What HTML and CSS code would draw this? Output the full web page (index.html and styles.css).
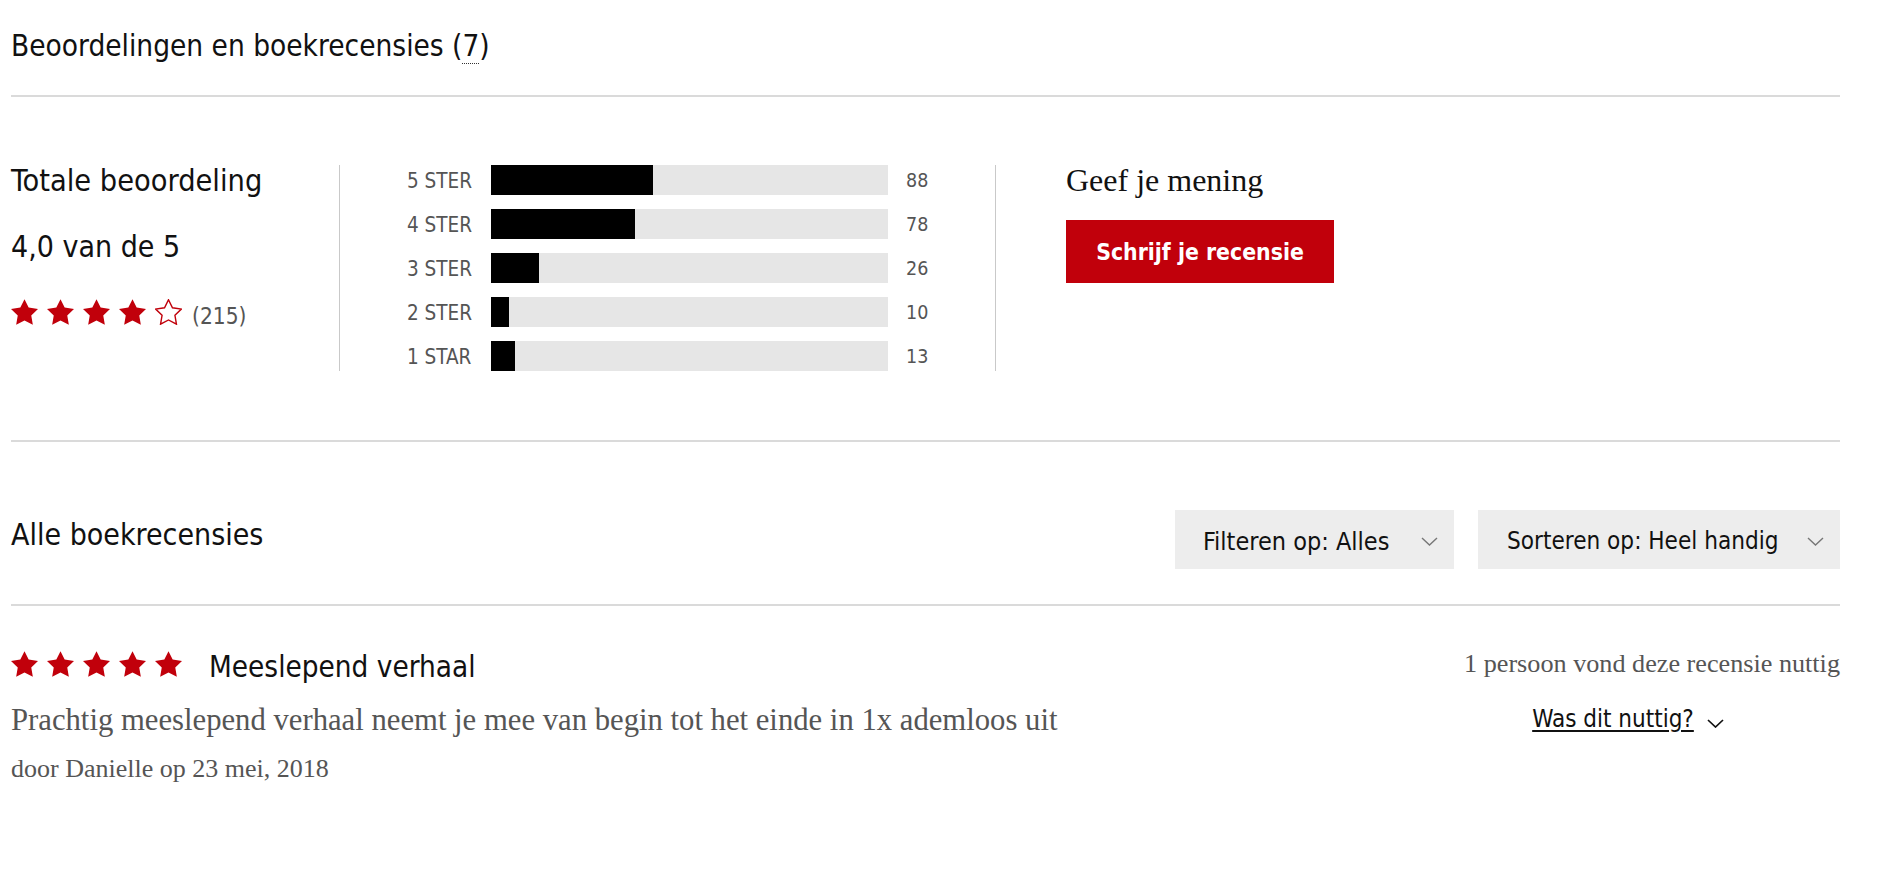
FILE: index.html
```html
<!DOCTYPE html>
<html lang="nl">
<head>
<meta charset="utf-8">
<title>Beoordelingen en boekrecensies</title>
<link rel="stylesheet" href="styles.css">
</head>
<body>
<div class="page">
  <header class="rv-head">
    <h2 class="rv-title">Beoordelingen en boekrecensies (<span class="rv-count">7</span>)</h2>
  </header>

  <section class="summary">
    <div class="overall">
      <div class="overall-title">Totale beoordeling</div>
      <div class="overall-score">4,0 van de 5</div>
      <div class="overall-stars">
        <svg class="star" viewBox="2 2 20 19.02"><polygon points="12,2 15.09,8.26 22,9.27 17,14.14 18.18,21.02 12,17.77 5.82,21.02 7,14.14 2,9.27 8.91,8.26"/></svg>
        <svg class="star" viewBox="2 2 20 19.02"><polygon points="12,2 15.09,8.26 22,9.27 17,14.14 18.18,21.02 12,17.77 5.82,21.02 7,14.14 2,9.27 8.91,8.26"/></svg>
        <svg class="star" viewBox="2 2 20 19.02"><polygon points="12,2 15.09,8.26 22,9.27 17,14.14 18.18,21.02 12,17.77 5.82,21.02 7,14.14 2,9.27 8.91,8.26"/></svg>
        <svg class="star" viewBox="2 2 20 19.02"><polygon points="12,2 15.09,8.26 22,9.27 17,14.14 18.18,21.02 12,17.77 5.82,21.02 7,14.14 2,9.27 8.91,8.26"/></svg>
        <svg class="star star-empty" viewBox="1.5 1.5 21 20.1"><polygon points="12,2 15.09,8.26 22,9.27 17,14.14 18.18,21.02 12,17.77 5.82,21.02 7,14.14 2,9.27 8.91,8.26"/></svg>
        <span class="overall-count">(215)</span>
      </div>
    </div>

    <div class="dist">
      <div class="dist-label">5 STER</div>
      <div class="dist-bar"><div class="dist-fill" style="width:40.93%"></div></div>
      <div class="dist-num">88</div>

      <div class="dist-label">4 STER</div>
      <div class="dist-bar"><div class="dist-fill" style="width:36.28%"></div></div>
      <div class="dist-num">78</div>

      <div class="dist-label">3 STER</div>
      <div class="dist-bar"><div class="dist-fill" style="width:12.09%"></div></div>
      <div class="dist-num">26</div>

      <div class="dist-label">2 STER</div>
      <div class="dist-bar"><div class="dist-fill" style="width:4.65%"></div></div>
      <div class="dist-num">10</div>

      <div class="dist-label">1 STAR</div>
      <div class="dist-bar"><div class="dist-fill" style="width:6.05%"></div></div>
      <div class="dist-num">13</div>
    </div>

    <div class="opinion">
      <div class="opinion-title">Geef je mening</div>
      <button class="btn-write" type="button">Schrijf je recensie</button>
    </div>
  </section>

  <section class="list-head">
    <h3 class="list-title">Alle boekrecensies</h3>
    <div class="controls">
      <div class="select select-filter">
        <span>Filteren op: Alles</span>
        <svg class="chev" viewBox="0 0 17 9"><polyline points="1,1 8.5,8 16,1"/></svg>
      </div>
      <div class="select select-sort">
        <span>Sorteren op: Heel handig</span>
        <svg class="chev" viewBox="0 0 17 9"><polyline points="1,1 8.5,8 16,1"/></svg>
      </div>
    </div>
  </section>

  <article class="review">
    <div class="review-main">
      <div class="review-top">
        <div class="review-stars">
          <svg class="star" viewBox="2 2 20 19.02"><polygon points="12,2 15.09,8.26 22,9.27 17,14.14 18.18,21.02 12,17.77 5.82,21.02 7,14.14 2,9.27 8.91,8.26"/></svg>
          <svg class="star" viewBox="2 2 20 19.02"><polygon points="12,2 15.09,8.26 22,9.27 17,14.14 18.18,21.02 12,17.77 5.82,21.02 7,14.14 2,9.27 8.91,8.26"/></svg>
          <svg class="star" viewBox="2 2 20 19.02"><polygon points="12,2 15.09,8.26 22,9.27 17,14.14 18.18,21.02 12,17.77 5.82,21.02 7,14.14 2,9.27 8.91,8.26"/></svg>
          <svg class="star" viewBox="2 2 20 19.02"><polygon points="12,2 15.09,8.26 22,9.27 17,14.14 18.18,21.02 12,17.77 5.82,21.02 7,14.14 2,9.27 8.91,8.26"/></svg>
          <svg class="star" viewBox="2 2 20 19.02"><polygon points="12,2 15.09,8.26 22,9.27 17,14.14 18.18,21.02 12,17.77 5.82,21.02 7,14.14 2,9.27 8.91,8.26"/></svg>
        </div>
        <h4 class="review-title">Meeslepend verhaal</h4>
      </div>
      <p class="review-body">Prachtig meeslepend verhaal neemt je mee van begin tot het einde in 1x ademloos uit</p>
      <p class="review-meta">door Danielle op 23 mei, 2018</p>
    </div>
    <div class="review-side">
      <div class="review-helpful">1 persoon vond deze recensie nuttig</div>
      <div class="review-vote">
        <span class="vote-link">Was dit nuttig?</span>
        <svg class="chev chev-dark" viewBox="0 0 17 9"><polyline points="1,1 8.5,8 16,1"/></svg>
      </div>
    </div>
  </article>
</div>
</body>
</html>
```

FILE: styles.css
```css
html, body {
  margin: 0;
  padding: 0;
  background: #ffffff;
}

body {
  font-family: "DejaVu Sans Condensed", "Liberation Sans", sans-serif;
  color: #111111;
}

.page {
  padding: 0 38px 0 11px;
}

/* header */
.rv-head {
  padding: 29px 0 32px;
  border-bottom: 2px solid #dadada;
}

.rv-title {
  margin: 0;
  font-size: 29.5px;
  line-height: 34px;
  font-weight: normal;
}

.rv-count {
  border-bottom: 1px dotted #333333;
}

/* summary */
.summary {
  display: flex;
  padding: 68px 0 69px;
  border-bottom: 2px solid #dadada;
}

.overall {
  width: 328px;
  border-right: 1px solid #c9c9c9;
}

.overall-title,
.overall-score {
  font-size: 30px;
  line-height: 34px;
}

.overall-title {
  font-size: 30.4px;
  margin-top: -1px;
}

.overall-score {
  margin-top: 32px;
}

.overall-stars {
  display: flex;
  align-items: flex-start;
  margin-top: 35px;
  height: 26px;
}

.star {
  width: 27px;
  height: 26px;
  margin-right: 9px;
  fill: #c1000b;
  flex: none;
}

.star-empty {
  fill: none;
  stroke: #c1000b;
  stroke-width: 1.1;
  stroke-linejoin: miter;
}

.overall-count {
  margin-left: 1px;
  margin-top: 4px;
  font-size: 22.5px;
  line-height: 26px;
  color: #555555;
}

.dist {
  display: grid;
  grid-template-columns: 83px 397px auto;
  grid-auto-rows: 30px;
  row-gap: 14px;
  width: 587px;
  padding-left: 68px;
  border-right: 1px solid #c9c9c9;
}

.dist-label,
.dist-num {
  font-size: 19.5px;
  line-height: 32px;
  color: #555555;
}

.dist-label {
  font-size: 20.5px;
  margin-left: -1px;
}

.dist-num {
  padding-left: 18px;
}

.dist-bar {
  background: #e6e6e6;
  height: 30px;
}

.dist-fill {
  background: #000000;
  height: 100%;
}

.opinion {
  padding-left: 70px;
}

.opinion-title {
  margin-top: -2px;
  font-family: "Liberation Serif", serif;
  font-size: 32px;
  line-height: 34px;
  color: #111111;
}

.btn-write {
  display: block;
  margin-top: 23px;
  width: 268px;
  height: 63px;
  border: none;
  padding: 0;
  background: #c1000b;
  color: #ffffff;
  font-family: "DejaVu Sans Condensed", "Liberation Sans", sans-serif;
  font-weight: bold;
  font-size: 22.8px;
  cursor: pointer;
}

/* list head */
.list-head {
  display: flex;
  justify-content: space-between;
  align-items: flex-start;
  padding: 68px 0 35px;
  border-bottom: 2px solid #dadada;
}

.list-title {
  margin: 8px 0 0;
  font-size: 30px;
  line-height: 34px;
  font-weight: normal;
}

.controls {
  display: flex;
  gap: 24px;
}

.select {
  display: flex;
  align-items: center;
  justify-content: space-between;
  box-sizing: border-box;
  height: 59px;
  padding: 3px 16px 0 28px;
  background: #ededed;
  font-size: 24.5px;
  color: #111111;
}

.select-filter {
  width: 279px;
  font-size: 25px;
}

.select-sort {
  width: 362px;
  padding-left: 29px;
  font-size: 24.1px;
}

.chev {
  width: 17px;
  height: 9px;
  fill: none;
  stroke: #777777;
  stroke-width: 1.4;
  flex: none;
}

.chev-dark {
  stroke: #111111;
  stroke-width: 1.7;
  margin-left: 13px;
  margin-top: 15px;
}

/* review */
.review {
  display: flex;
  padding-top: 44px;
}

.review-main {
  flex: 1;
}

.review-top {
  display: flex;
  align-items: flex-start;
}

.review-stars {
  display: flex;
  margin-top: 1px;
}

.review-stars .star:last-child {
  margin-right: 0;
}

.review-title {
  margin: 0 0 0 27px;
  font-size: 29.4px;
  line-height: 34px;
  font-weight: normal;
}

.review-body {
  margin: 16px 0 0;
  font-family: "Liberation Serif", serif;
  font-size: 30.7px;
  line-height: 40px;
  color: #555555;
}

.review-meta {
  margin: 12px 0 0;
  font-family: "Liberation Serif", serif;
  font-size: 26px;
  line-height: 34px;
  color: #555555;
}

.review-side {
  width: 424px;
  margin-top: -3px;
}

.review-helpful {
  text-align: right;
  font-family: "Liberation Serif", serif;
  font-size: 26.2px;
  line-height: 34px;
  color: #555555;
}

.review-vote {
  display: flex;
  justify-content: center;
  align-items: flex-start;
  margin-top: 23px;
}

.vote-link {
  font-size: 24px;
  line-height: 30px;
  color: #111111;
  text-decoration: underline;
  text-underline-offset: 3px;
}
```
